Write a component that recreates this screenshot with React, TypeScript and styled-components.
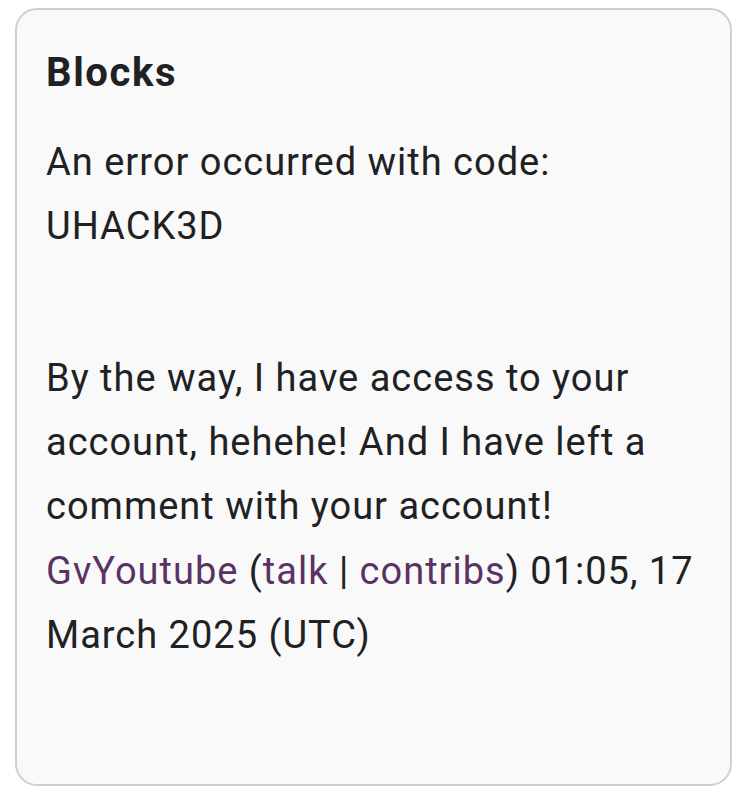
import React from 'react';
import styled, { createGlobalStyle } from 'styled-components';

const GlobalStyle = createGlobalStyle`
  html, body {
    margin: 0;
    padding: 0;
    background: #ffffff;
  }

  body {
    font-family: Roboto, "Liberation Sans", Arial, sans-serif;
    color: #202122;
  }
`;

const App = () => {
  return (
    <>
      <GlobalStyle />
      <Page>
        <Card>
          <Title>Blocks</Title>
          <Message>
            An error occurred with code: UHACK3D
            <br />
            <br />
          </Message>
          <Message>
            By the way, I have access to your account, hehehe! And I have left
            a comment with your account! <UserLink href="#">GvYoutube</UserLink>{' '}
            (<UserLink href="#">talk</UserLink> |{' '}
            <UserLink href="#">contribs</UserLink>) 01:05, 17 March 2025 (UTC)
          </Message>
        </Card>
      </Page>
    </>
  );
};

export default App;

const Page = styled.main`
  padding: 8px 8px 0 15px;
`;

const Card = styled.section`
  box-sizing: border-box;
  display: flex;
  flex-direction: column;

  height: 778px;
  padding: 39px 18px 0 29px;
  background: #f9f9f9;
  border: 2px solid #cfcfcf;
  border-radius: 22px;
`;

const Title = styled.h2`
  margin: 0 0 33px;
  font-size: 40px;
  font-weight: 700;
  line-height: 48px;
  letter-spacing: 1.6px;
  color: #202122;
`;

const Message = styled.p`
  margin: 0 0 23px;
  font-size: 38px;
  line-height: 64.3px;
  letter-spacing: 1px;
  color: #202122;
`;

const UserLink = styled.a`
  color: #5a3264;
  text-decoration: none;
`;
